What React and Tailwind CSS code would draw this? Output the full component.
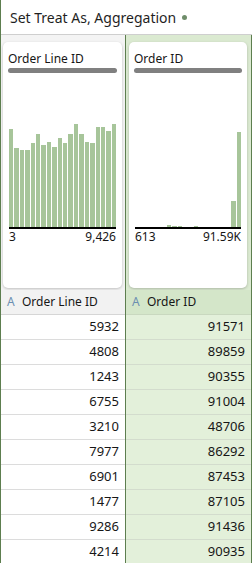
const leftBars = [98, 79, 77, 77, 84, 93, 82, 85, 80, 89, 84, 93, 103, 93, 85, 84, 100, 100, 96, 103];
const rightBars = [0, 0, 0, 0, 0, 0, 2, 1, 1, 0, 0, 1, 0, 0, 0, 0, 0, 0, 26, 95];

const leftRows = ["5932", "4808", "1243", "6755", "3210", "7977", "6901", "1477", "9286", "4214"];
const rightRows = ["91571", "89859", "90355", "91004", "48706", "86292", "87453", "87105", "91436", "90935"];

function Card({ label, bars, min, max }) {
  return (
    <div className="h-[246px] bg-white rounded-[5px] shadow-[0_1px_3px_rgba(0,0,0,0.22)] flex flex-col px-[5px] pt-[9px]">
      <div className="text-[12px] leading-[15px] text-[#161616]">{label}</div>
      <div className="mt-[2px] h-[5px] rounded-full bg-[#808080]" />
      <div className="mt-[4px] h-[150px] flex items-end gap-px px-[1px]">
        {bars.map((h, i) => (
          <div key={i} className="flex-1 bg-[#a7c59a]" style={{ height: h }} />
        ))}
      </div>
      <div className="h-[2px] bg-black mx-[1px]" />
      <div className="mt-[1px] flex justify-between text-[12px] leading-[14px] text-[#161616] px-[1px]">
        <span>{min}</span>
        <span>{max}</span>
      </div>
    </div>
  );
}

function Column({ label, bars, min, max, rows, selected }) {
  return (
    <div
      className={
        selected
          ? "flex-1 flex flex-col border-l border-r border-[#5d7e4f] bg-[#e3f0da]"
          : "w-[124px] flex flex-col bg-white"
      }
    >
      <div
        className={
          selected
            ? "h-[255px] shrink-0 pt-[7px] pl-[3px] pr-[4px] bg-[#dbead1]"
            : "h-[255px] shrink-0 pt-[7px] pl-[2px] pr-[3px] bg-[#f4f4f4]"
        }
      >
        <Card label={label} bars={bars} min={min} max={max} />
      </div>
      <div
        className={
          selected
            ? "h-[25px] shrink-0 flex items-center pl-[6px] border-b border-[#c9d8bf] bg-[#d4e6c9] text-[12px]"
            : "h-[25px] shrink-0 flex items-center pl-[6px] border-b border-[#d6d6d6] bg-[#f2f2f2] text-[12px]"
        }
      >
        <span className="text-[#6c8fb1] w-[15px]">A</span>
        <span className="text-[#161616]">{label}</span>
      </div>
      {rows.map((r, i) => (
        <div
          key={i}
          className={
            selected
              ? "h-[25px] shrink-0 flex items-center justify-end pr-[6px] border-b border-[#d3dccd] text-[13px] text-[#161616]"
              : "h-[25px] shrink-0 flex items-center justify-end pr-[6px] border-b border-[#dcdcdc] text-[13px] text-[#161616]"
          }
        >
          {r}
        </div>
      ))}
    </div>
  );
}

export default function App() {
  return (
    <div
      className="w-[252px] h-[563px] overflow-hidden bg-white border-l border-[#5d7e4f] flex flex-col"
      style={{ fontFamily: '"Noto Sans", "Open Sans", sans-serif' }}
    >
      <div className="h-[35px] shrink-0 flex items-center pl-[9px] border-b border-[#cfcfcf]">
        <span className="text-[14px] text-[#1f1f1f]">Set Treat As, Aggregation</span>
        <span className="ml-[6px] w-[5px] h-[5px] rounded-full bg-[#6f8d6a]" />
      </div>
      <div className="flex flex-1 min-h-0">
        <Column label="Order Line ID" bars={leftBars} min="3" max="9,426" rows={leftRows} />
        <Column label="Order ID" bars={rightBars} min="613" max="91.59K" rows={rightRows} selected />
      </div>
    </div>
  );
}
